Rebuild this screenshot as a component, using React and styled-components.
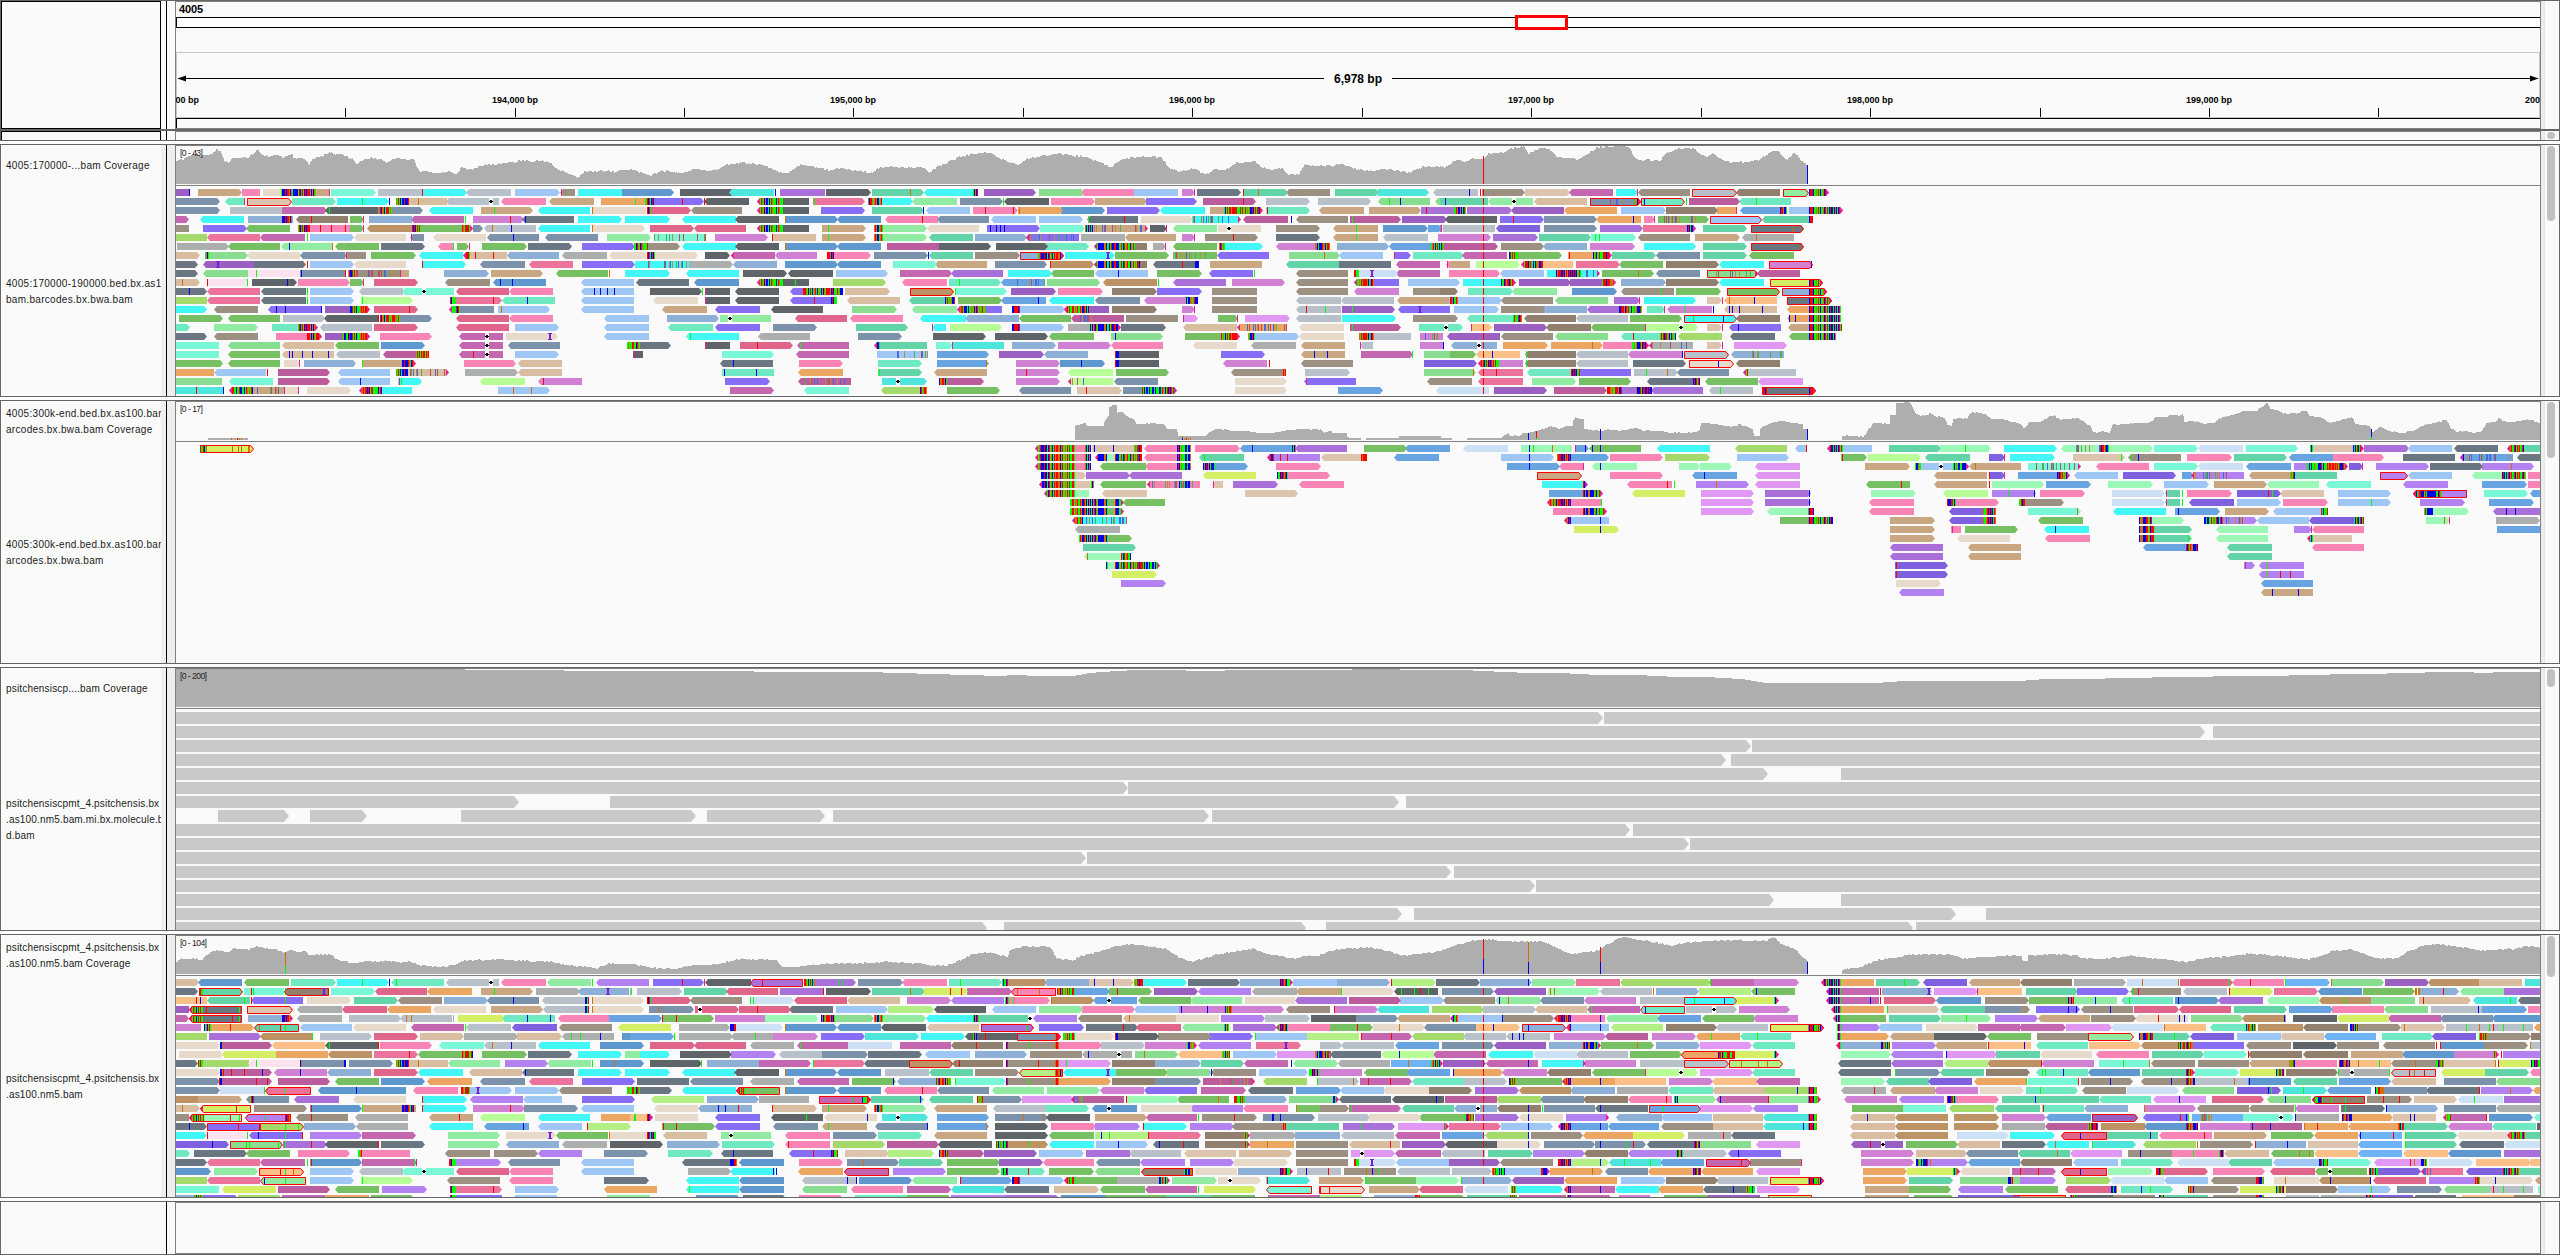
import React from "react";
import styled, { createGlobalStyle } from "styled-components";

const Page = createGlobalStyle`
  html, body { margin: 0; padding: 0; background: #fdfdfd; }
  body { width: 2560px; height: 1255px; overflow: hidden; font-family: "Liberation Sans", Arial, sans-serif; }
`;

const Window = styled.main`
  display: flex;
  flex-direction: column;
  width: 2560px;
  height: 1255px;
  box-sizing: border-box;
`;

const Panel = styled.section`
  display: grid;
  grid-template-columns: 160px 6px 8px 2366px 1fr;
  box-sizing: border-box;
  height: ${(p) => p.$h}px;
  margin-bottom: ${(p) => p.$gap || 0}px;
  border: 1px solid #666;
  background: #fafafa;
  overflow: hidden;
`;

const NameColumn = styled.div`
  display: flex;
  flex-direction: column;
  min-width: 0;
  overflow: hidden;
  box-sizing: border-box;
  border: ${(p) => (p.$boxed ? "1px solid #000" : "none")};
  border-bottom-width: ${(p) => (p.$open ? 0 : 1)}px;
`;

const TrackName = styled.div`
  display: flex;
  flex-direction: column;
  justify-content: center;
  flex: ${(p) => (p.$coverage ? "0 0 42px" : "1 1 0")};
  padding-left: 5px;
  color: #1a1a1a;
  font-size: 10px;
  line-height: 16px;
  letter-spacing: ${(p) => (p.$wide ? 0.3 : 0.17)}px;
  white-space: pre;
`;

const Strip = styled.div`
  background: ${(p) => (p.$plain ? "#fafafa" : "#eee")};
  border-right: ${(p) => (p.$rule ? "1px solid #000" : "none")};
`;

const DataColumn = styled.div`
  box-sizing: border-box;
  border: 1px solid #808080;
  border-bottom-width: ${(p) => (p.$closed ? 1 : 0)}px;
  overflow: hidden;
`;

const ScrollColumn = styled.div`
  box-sizing: border-box;
  padding: 1px 2px 0 6px;
  background: linear-gradient(to right, #ececec 3px, #e4e4e4 3px, #e4e4e4 4px, #fafafa 4px);
`;

const ScrollThumb = styled.div`
  width: 8px;
  height: ${(p) => p.$h}px;
  border-radius: 4px;
  background: #c1c1c1;
`;

const Canvas = styled.svg`
  display: block;
  font-family: "Liberation Sans", Arial, sans-serif;
`;

const LEFT = 176;
const WIDTH = 2364;

const COLORS = {
  a: "#9ec7f5", b: "#5f97cf", B: "#68a3e2", c: "#42f7f5", C: "#4de6dd", d: "#5f6468", D: "#6a7681",
  e: "#7c91aa", f: "#8fb0d6", g: "#76bf63", G: "#89dd91", h: "#91eba3", H: "#9cf8b7", i: "#79f7d6",
  I: "#6fe9c2", j: "#63d4a7", k: "#b8fe96", K: "#a4da6b", l: "#b4ef86", m: "#c566b0", M: "#bb5c9c",
  n: "#f985b6", N: "#ec739c", o: "#eba664", O: "#fbc088", p: "#9b5fc2", P: "#a970d9", q: "#886ef6",
  Q: "#7f60df", r: "#e0658a", s: "#b8c0c9", S: "#adafaf", t: "#c9a782", T: "#d8bda1", u: "#9c9083",
  U: "#90806d", v: "#b481f1", V: "#d081d3", w: "#e8dacb", W: "#cde1f6", x: "#bd9265", y: "#d4ee66",
  z: "#e098f2", Z: "#fce2ee", E: "#6fb3f7", F: "#dcc4ae",
};
const BASES = { r: "#ff0000", g: "#00ff00", b: "#0000ee", o: "#d17105", m: "#e8208c", s: "#a5b0ba" };
const STRIPES = [BASES.r, BASES.g, BASES.b, BASES.o, BASES.r, BASES.g, BASES.b];

const hash = (n) => {
  const v = Math.sin(n * 91.7 + 4.3) * 24634.6345;
  return v - Math.floor(v);
};

/* Read notation: start, strand (< > or = for square ends), colour, end, ! when outlined.
   After commas: #a-b clipped bases, ~a-b scattered mismatches, .x deletion, ^x insertion,
   and a base letter with a position for one mismatch. */
function parseReads(blocks, y0) {
  const fills = {};
  const marks = {};
  const outlines = [];
  const inserts = [];
  const put = (bag, color, d) => { bag[color] = (bag[color] || "") + d; };
  blocks.forEach(({ ox, scale, rows }) => {
    const X = (v) => Math.round(ox + v / scale);
    rows.trim().split("\n").forEach((line, row) => {
      const y = y0 + row * 9;
      line.trim().split(/\s+/).forEach((token) => {
        const m = /^(\d+)([<>=])([A-Za-z])(\d*)(!?)(.*)$/.exec(token);
        if (!m) return;
        const x0 = X(+m[1]);
        const x1 = m[4] ? X(+m[4]) : X(Math.min(1568, +m[1] + 44 * scale));
        const extras = m[6].split(",").filter(Boolean);
        const r = m[2] === ">" ? 3 : 0;
        const l = m[2] === "<" ? 3 : 0;
        const d = `M${x0 + l} ${y}H${x1 - r}${r ? `L${x1} ${y + 3.5}L${x1 - r} ${y + 7}` : `V${y + 7}`}H${x0 + l}${l ? `L${x0} ${y + 3.5}` : ""}Z`;
        put(fills, COLORS[m[3]], d);
        if (m[5]) outlines.push(`M${x0 + l + 0.5} ${y + 0.5}H${x1 - r - 0.5}${r ? `L${x1 - 0.5} ${y + 4}L${x1 - r - 0.5} ${y + 7.5}` : `V${y + 7.5}`}H${x0 + l + 0.5}${l ? `L${x0 + 0.5} ${y + 4}` : ""}Z`);
        extras.forEach((e) => {
          const k = e[0];
          const [p, q] = e.slice(1).split("-").map(Number);
          if (k === "#" || k === "~") {
            let a = X(p);
            let b = X(q);
            if (l && a < x0 + 4) {
              put(marks, BASES.m, `M${x0 + 3} ${y}V${y + 7}L${x0} ${y + 3.5}Z`);
              a = x0 + 3;
            }
            if (r && b > x1 - 4) {
              put(marks, BASES.m, `M${x1 - 3} ${y}V${y + 7}L${x1} ${y + 3.5}Z`);
              b = x1 - 3;
            }
            for (let x = a; x < b; x++) {
              const n = hash(x * 1.37 + (k === "~" ? row : 0));
              if (k === "#") put(marks, STRIPES[Math.floor(n * 7)], `M${x} ${y}h1v7h-1z`);
              else if (n < 0.24) put(marks, ["#b98a4a", "#4a6ad8", "#b8505a", "#4fb04f"][Math.floor(n * 16.6)], `M${x} ${y}h1v7h-1z`);
            }
          } else if (k === ".") {
            const x = X(p);
            put(marks, "#fafafa", `M${x - 2} ${y}h4v7h-4z`);
            inserts.push(["#000", `M${x - 2} ${y + 3}h4v1h-4zM${x - 1} ${y + 2}h2v3h-2z`]);
          } else if (k === "^") {
            const x = X(p);
            inserts.push(["#7a1fd8", `M${x - 2} ${y}h4v1h-1v5h1v1h-4v-1h1v-5h-1z`]);
          } else if (BASES[k]) {
            put(marks, BASES[k], `M${X(p)} ${y}h1v7h-1z`);
          }
        });
      });
    });
  });
  return { fills, marks, outlines, inserts };
}

function Reads({ data }) {
  return (
    <g>
      {Object.entries(data.fills).map(([c, d]) => <path key={c} d={d} fill={c} />)}
      {Object.entries(data.marks).map(([c, d]) => <path key={c} d={d} fill={c} />)}
      <path d={data.outlines.join("")} fill="none" stroke="#f00" />
      {data.inserts.map(([c, d]) => <path key={d} d={d} fill={c} />)}
    </g>
  );
}

const pts = (ox, scale, oy, text) =>
  text.trim().split(/\s+/).map((t) => {
    const [x, y] = t.split(",").map(Number);
    return [ox + x / scale, oy + y / 3];
  });

function coveragePath(points, base, jitter) {
  const first = Math.round(points[0][0]);
  const last = Math.round(points[points.length - 1][0]);
  let d = `M${first} ${base}`;
  let i = 0;
  for (let x = first; x < last; x++) {
    while (i < points.length - 2 && points[i + 1][0] <= x) i++;
    const [xa, ya] = points[i];
    const [xb, yb] = points[i + 1];
    const t = xb > xa ? Math.min(1, Math.max(0, (x - xa) / (xb - xa))) : 0;
    const y = Math.round(ya + (yb - ya) * t + (hash(Math.floor(x / 2)) - 0.5) * jitter);
    d += `V${y}H${x + 1}`;
  }
  return `${d}V${base}Z`;
}

const P1_READS = parseReads([
  { ox: 0, scale: 2.45, rows: `
431=p466,b462 485>t594 594=n636 644=w690,#688-773 773=t805,m805 811>i920 926=s1034,r1034 1034>c1143 1142<s1252 1262>a1371 1373<u1408,m1375 1416=c1524 1524=b1568
431>e540 552<I600,m599 606>F716! 716>I822 826>c952,g888,b952 970=T1095,#970-1003,o1025 1093<s1222,.1202 1228<n1338 1345<t1455 1472=o1568,g1555
431>e540 563=s690 690>m800 797<d926,g806 926>e1037,#929-960 1050<c1158 1178>t1305,g1211 1317<c1446 1451=w1568,o1451
431>m462 489<c598 608=f718,#692-716 724<U853,r763 858>g892,m890 904=f1010 1008<m1137,g1140 1160>V1283,r1250 1278<D1406,b1287 1416>c1524 1531=c1568
431=u463 497>q605 603<g710 730=n858,#730-760,r785,r812,r845 858>g892,m890 898<x1010,#1010-1030 1030>g1160,#1132-1160 1160>e1183 1186<s1313,o1206,b1252 1317<c1446 1451=w1568,o1451
431=K507 508<N637 638<m747,g751 759>a868 867<w995 1005<e1039,m1007 1062<w1191 1192<e1321,b1258 1336<e1464 1487=h1568
434>S560 558<g686 688<h815,b709,o814 820<g929 933>D1042 1074<n1111,g1110 1120>g1150,m1148 1181>g1290 1294>D1402 1426>q1555,r1560
431>T489 503>G608,#503-512 606<w735 734<e845 843<u897,m848 909>g1018 1026<c1135 1135<T1241,#1135-1152,r1163,r1208 1242<f1370 1378<S1487 1492<w1568
431>D484 497<p622,^534 622>D750,r753 759>a868 867<w995 1034>c1142,r1035 1177<e1286 1295<N1404 1426>q1555 1558=c1568
431>D484 498<G607 608=Z735,g628 735=e847,r845,b737 852=u980,#855-870,~870-975,m980 980=t1002 1088>f1197 1203>t1331 1361<g1490,o1493 1531=c1568
431>T489,o445 508=Z608,r508,g606 617>d727,b704 730>n858 858>g892,m890 916>r1025 1091<u1200 1209<b1338,b1255,b1225 1424<a1553 1560<D1568
431>D507,b464 508<N637 640<D749,g753 759>a868 880<s987 985<i1112,.1038 1118<r1247 1247<n1355 1424<a1553,b1456,b1471,b1487,b1504
431=K507 508<N637 640<D749,g753 759>a868 884>k1013,g886 1102>N1230,#1102-1118,r1208 1230<I1360,b1292 1424<a1553
431>c508 524<u633 657<q787,b675,b698,b787 796>p907,#858-905 916>r1025,r1003 1101<e1210,#1103-1127 1220>a1348,o1228 1424<a1553
439>g547 558<g686 693>s797 795<d926,r926 931>e1059,#931-980 1118<r1247 1247<n1355 1480<a1568
431>I466 524>h633 666>I778,#731-775 784<s912 916>r1025 1118<r1247 1262>a1370 1480<a1568
431>D508 524<u633 676>n788,#751-786 796>p907,#838-905 931>n1059 1124<m1232,.1192 1240>w1366,^1347 1480<a1568
431=i537 558<G686 690<T818 820<g929 933>b1042 1124<m1232,.1192 1244<e1372 1536=D1568,#1536-1568
431=i537 558<g686 690<T818,b709,b715,b741,b765,b803 822<s931 939<M1052,#1020-1052 1124<m1232,.1192,r1160 1262>a1370 1552<d1568
431>g547 558<g686 697>w735,m733 745>f873 888>t1018,#986-1014,g888 1137>n1265 1268<T1377
431=o524 524<a652,r655 681>M809 827<a955 970>T1101,#970-1000,~1000-1095 1139>S1268 1268<T1377
431=G544 560<i669 681>M809 827<a955,b882 976>c1033,m977,g982 1177<k1286 1317<V1426,r1331
431=C550,b547,r481 562<t695,#562-620,~620-690,m695 695=w730,m729 752>w861 880<c1009,#880-936 1220>a1348,o1258,o1302` },
  { ox: 630, scale: 1.912, rows: `
0>b85 96=d195 190<C275,b278 287=P372 375>d460 463>j563,o535 562<c656,#656-666 677>p777 782=G864 862<n964 964=a1048 1056>V1080,m1078 1084>D1169,r1173 1173>j1258,o1200 1254<u1339 1348>j1432 1430>C1528 1536<s1568
0=o42,#28-46 42>q142,r142,r100 142<d228 242<d342,#242-292 350>N450,g351 456>c541,#456-482 540<h625 631>e714,g713 716<d801 805>n889 889>t988 986>q1084 1096>M1196,r1172 1216>s1301 1316>s1416 1430<G1530,g1452,b1473 1540<G1568
0=w30 33>r117,#33-41 117<u214 242<d342,#242-292 365>q450 463>j562,b560 565<a650 656>n741,r678,r732 742>o827,o743 824>b908 912>q1013 1014<c1100 1109>t1211,#1136-1211 1216>I1301,r1217 1318<t1403 1413>t1512 1512=P1568,r1522
0>c76 100<c202 200<d285 296>b398,o297 396<b480 487<n588,r558 587<e686 691<a776 782>a867 873<D972,r944,g875 977>w1077 1075>c1168,~1075-1168 1172<M1258,b1263 1273<u1373 1376>M1475,g1380 1476>p1562
0>w28 38>r123 122<r222 242<d342,#242-292 367>t452,g378 467>h568,#467-484 567<w667 683>q784,b688,b700,b708,b716 783>i870 870>t990,#870-886,~886-990 994>d1026,m1024 1038<h1122 1125=w1207,.1146 1235>u1320 1345<t1430,g1388 1440>b1525 1525>B1552,m1550 1555=s1568
0>h40 46=i145,~46-145 163>V263 272=T356,r272 367>t452,g378 467>h568,#467-484 571<j656 660>f759 757<q859,~757-859 862=S946 946<t1044 1056>V1080,m1078 1100>u1200,r1153 1235>D1320 1345<t1430,g1388 1440<s1526 1545=V1568
8>u95,#8-34 100<c202 200<d285 296>b398,o297 396<b480 491=M590 590>d690 699>d799 795>I878 888<U988,#888-965 1000>S1025,m1023 1038<g1122 1127>c1211,#1127-1138 1236<V1339,#1310-1339 1352>f1451 1451<B1551,#1532-1551 1557=M1568
0=w30 33>w130,#33-48 143>d192 194<m277,#194-199 277<V358 377>n461,#377-390 467>e570,b569 571<j656 660>u745 745>f829!,#780-829 832>c928,^914 928>g1030 1038=g1122,~1038-1110 1122<q1222 1260>G1358,o1326 1356<a1440 1460>q1494,m1460 1497=I1568
10=c112,~30-110 112>S196 196<f281 296>b398 396<b480 503>i587 583<t683 698>e797 803>x888,r803 888<U988,#888-975 1000<D1087,#1080-1087,r1055 1109=t1208 1255<j1356 1356=D1455 1464<m1549 1560<n1568
0>c76 108<c208 216>d301 302<d388 394>a494 516>m616 614<P713 723>c807 804<g887 890<a991,b934 1008>g1093 1107<q1191,g1194 1273<u1373 1384>W1468,#1384-1394,^1419 1464<m1549
0=a8 12<D113 122<b208 242<d342,#242-292,g315 388>K490 521<n606 610>I710,g630 709<B794,~740-794 798>G898 905<x1007,g1009 1038<P1140 1151>V1252 1273<u1373 1385<q1470,#1385-1423 1488=a1568
0=a8 38>d138,g137 143=d192,m143 200<d285 305<q408,#330-408 411>T497 535>x620! 621>i720,g621 728>p814 818>n904 922>U1007 1007>q1093 1113=u1198 1273<u1373 1385<V1470 1497=u1568
0=a8 44<w130 143=d192,m143 200<d285 305<q395,#385-395,r351 415<T516 534<j618,#602-622 627>g711 709<B795,b781 802<c888 890<e975 983<V1086,#1063-1086 1113=u1198 1273<s1360 1360<s1460 1466<t1568
0=a8 62<t147 163<q249 269<d369 425>G510 540<h626 626<q711,#626-680 730>a832,#730-746 830<p916,#830-880 922>U1007 1056>V1080,m1078 1113=u1198 1273<s1360,r1292,g1328 1362>p1463,g1380 1468<q1568,^1510
0=a36 71>f171 172=h270,.192 315<r415 421<n522 555<c642 641<f744 743<g844 843<M945,~850-900 948=u1048 1057>z1086,m1058 1124>g1162,m1160 1176>z1261 1273<s1360 1362>c1464 1497=u1568
0=a36 72<I158 163<q249 273>e358 432>j532 577<c604,m578 612>k712 730>a830,#730-745 838>S938,#880-938 939>D1024 1058<T1160 1160<o1257,~1165-1257 1280<w1365 1376>M1475,g1380 1509=I1568,.1560
0=a36 108<c208,g114 244<S344 436>e521 580>d681 698>d799 802<g887 920>G1019,b928 1062>g1166,#1130-1166 1182>a1280,#1182-1195 1280<w1365 1394=s1494,#1394-1422 1511=V1555,~1511-1555
0>D79,#0-12 143=d192,m143 210>r311,r243 319<m419,g325 467<j568,#467-478 586>i617,m616 617=C715 730>f815 818>V919 919<n1019 1076<w1161 1188<S1274 1282<t1367 1395<s1421,m1396 1511=V1555,b1554
5=d25,m7 176>i276 318<m419 472=a570,~500-570 587>B687 706>p791 792<f876 928=d1012,#928-935 1130>q1215 1282<t1367,b1308,b1332 1398>m1498,g1496 1518=G1568
173<D273,b196 323>n408 474>I559 587>B687,o680 738>V823 823>b908,b863 928=d1012,#928-935 1133<V1218,r1222 1282<u1382 1518=Q1568
176=I275,b240,b180 321<o407 474>j559,g477 582<t683 738>V823,r758 838<k924 929>g1030 1149<u1254,#1249-1254 1291>s1376 1518=G1568
182>q267 322<M423,~330-415 482>C568,.512 591>M676,#591-607 738>V823 838<k924,#838-842,~842-878 925<e1010 1157>w1257 1288<q1388,m1292 1524<u1568
191>m276 333<i419 479<K568,#554-568 606>g707 743<e843 855>F940,r871 943>e1045,#978-1045 1157>w1257 1354>B1439 1541<W1568` },
  { ox: 1440, scale: 2.45, rows: `
0=s93,b70,r97 102>u209 209>F318 315<m424 431>c486,m482 484<u612 618>s727! 726<U833 841>h904! 903>r952,#903-948
0=j118,b13 118<h228,.181 231<T360 368>e492!,~410-470,#475-492 492>I601!,b501,g602 609>M734 733<I860,g775
0=P63,#35-63 65>P176 175<p304 304<o434 443>a553 554>U680 678=o727,m726 736<B850,#832-850 855=a905 903>r987,#903-987
0>p14 12<d140 147>q256,r180 255>e384 383<o492,b474 500>n526,m524 534>g660,~550-645 661>a790! 788<j903,#903-915
0=m4 6<s135 136<Q245 255>e384 391>P498 497>N628,#606-628 644>j753 763>D892!,o865
0>V124 130>P239 243>j370 369>i479,g390,g380 484<u612 625>t734 739<S867,o775
0>M141,#0-10 149>u256 253<f360 367>V477 500>c628 644>j753 763>D892!,o885
0>I60 55<m164 170>g298,#170-190 314>o422,#375-422,r315 422>j530 528<e637 644>j753 758<g867
16<t73,m17 88>k197 198<O326,#198-253 333>N440 438<g546 554>U683 684<c794 805>V914!,b909
22>n148 147<a255 262>c392,#285-345,~345-390 398>g525,o484 528<e637 653>G778!,~653-778 776<M882
0>a50 56>c187,#150-187 194>p320 318>p430,#397-430 443>f553 554>U683 684<c794 809>y938!,#903-938
0>U43 69>I178 177<h287 323>b433 444<u573,g538 578>g688 702>g832! 839>f948!,#903-948
0=t25 22>a152,#25-45 149<u277 282<G412 426>P490,m488 500>c628 653>F692,m690 697<O826,b770,o707 851>D960!,#903-960
0=q22 34>a144 149=u257 253<f360 361<P495,#438-495 507>I552,m550 557<V666,g601,b670 697<T826,b709,b716,b732,b789 849<o982,#903-982
0>u43 67<I200,#180-200 206<U333 333<s461 465>g594 599>c727!,g621,b694 726<U833 849<o982,b855,b869,#903-982
0>I56,.14 76>O128,m77 132>p261 260<U370 371<g503,m503 505>k632,.590 653>F692,m690 707<q835,b731 852<t985,#903-985
18<p148 149<u277 282<G412 444<I577,#538-577,r472 583<K692 711<D821 855<g970,#903-970
28<f140,.95 154>o264 272>o400,o373 399>n513,#470-513 513<S620,~516-612 653>F692,m690 720>z849
0>g88 88<O196,b128 208<U333,g211 333<s461 461<V594,b594 599>s709! 714<f843,~740-840
0>Q90 94<V203,#94-145 208<U333,g211 333<s461 473>D602 611>w721!,b680 724<U833
0>G88,o80 94<N203,r138 212<I322 322=q468,#322-343 475>s583,g505,o557 580<e708 742<s872,#742-755
0=u78 94<N203 225>h334 341>g469 506<D638,#620-638 650<g779 780<z889
0=W120 132>p261 279>M408 409=P519,#409-445,#480-519 516<P644 658<s767,g687 790>D920!,#790-800,#903-920` },
], 189);

const P2_READS = parseReads([
  { ox: 0, scale: 2.45, rows: `490>y622!,#490-508,o568,o583,o590,o607,o611` },
  { ox: 1000, scale: 2.24, rows: `
78<n203,#78-168,#190-203 205=F318,#300-318,b211,b252 323<n428,#396-428 437>n537 538<B662,b565,#655-662 661<P777 815>g912 908<B1008 1037<W1138 1167=H1281,o1237,b1184,g1195 1287>B1320,m1287,b1310 1320<g1436,b1345,b1325 1472<c1568
78<n203,#78-168,#190-203 213<H318,#213-240,#258-318 323<n428,#396-428 446<j547,g458 598<v717,#598-613,r628,r642 718<F822,#808-822 883<B983 1122>a1241,b1184 1247>B1365,#1247-1280 1366>n1485 1490=K1568
78<n203,#78-168,#190-203 224<g326 324<n428,#396-428 455>B555,#455-482 618>n719 1136>B1254,b1184 1252<n1306,m1305 1327<H1427,b1345 1521>H1568
92>F192,#92-168 193>P292 290<P408 455<y573 620>n739,#620-645 1202>t1303!,g1202 1366>n1485 1551<B1568
87<F210,#87-168,#203-210 224<g326 330<n448,#400-425,~335-440 475<F500,m476 522>P622 670<n771 1214>c1317,#1305-1317 1405<n1505,r1493,g1509 1559=v1568
98<H199,#98-168 229<F329 549>F667 1230>B1350,#1305-1350 1416<y1534
157>g277,#157-243,#258-277 275<g370 1225<n1348,#1225-1280,g1346
157>g277,#157-243,#258-277 1239>n1360,#1306-1360
161<c284,#161-185,~185-284,~186-284 1263<a1364,#1263-1280,b1345
168<S269 1286>y1387,b1345
177>g296,#177-242
186>j305
188<H293,#271-293,o195
237>H358,#237-243,#258-358
251>y352
271>v372` },
  { ox: 1700, scale: 1.823, rows: `
0=c18 63<K159 173<a195,r194 232<a314,#232-260 345>j440 438>H531,g484 554>c650 659<H745,~685-730,#730-745 745>H825 827>i908 908<W990 995>i1091 1112>F1210,#1112-1117,#1190-1210 1210>P1292 1291<a1371 1374<D1455 1472<j1532,#1472-1503
0>K18 67>a163 257>g304,r258 306>k402 411<j492 527>Q556,m554 565>c647 680>F775,g767 781<u877,g785,b799 888>n970 974>j1070 1073<B1154 1152>n1247 1282=D1377 1386<B1482,#1386-1392,~1392-1475 1490<D1532
0>H58 100<z182 301>t382 392>a490,#392-402,#462-490,.440 490<t585,o502 598>i694,~605-690 722<n819 827>i908 908<W990 996<B1078 1083>v1181,#1107-1181 1183>Q1208,m1206 1233>v1329 1331>D1427 1425>v1520,o1478
0=B67,b8 100<z182 427<t523,r526 527>Q556,m554 580>B675,#650-675 681<a762 771>Q867 879>B900 895<v992,~900-970,m898 1000<t1078,#1075-1084 1084=j1161 1240>v1291! 1290<a1371 1408<H1506,#1462-1506 1510=n1532
0>v89,o30 100<z182 302<g383,r367 427<t523,r526 532>H628 631>B712 744>H825 846>a927 937>t1033 1033<H1129 1142<i1223 1282<v1364 1426>B1507 1510=n1532
2>z98 119>P202,b199 312>H393 443<k525 532>v613,g561,b609 620>n701 751>W847 848<j875,g878,m850 888>n970 979>Q1060,r1035,g1042 1057<F1138 1163>a1260 1300<v1398!,#1300-1352 1429>i1510 1514<B1532
2>z98 119>P202,b199 308<n390 450>n545,#450-467 582>u664,#582-593 751>W847 848<j875,g878,m850 892<Q974 979>a1060 1062>n1144 1163>a1260,g1224 1313>v1394 1439>B1520
2>z98 122<H208,#197-208 308<n390 454<Q540,#516-540 598>i694,o688 753<c850 866>B948,b872 957>t1038 1045<a1145,#1132-1145 1320>H1401,#1320-1336 1445<P1532,b1470,b1486
146=g243,#197-243 346>t428 454<Q540,#516-540 617<g698 800>H882,#800-824 918>v1015,#918-952,~952-990 1015<a1110 1110<Q1211,#1192-1211 1324>H1368,m1366,o1356 1451>S1532
346>t428 458=n476,m459 483>g579 627<c709,b648 800>j897,#800-827 940<H1036 1083>v1115 1115<n1211,m1113 1453=B1532
346>t428 469<w565 629<n711 800>j897,#800-827,g890 940<H1036 1107<F1189,#1107-1118
346<P443 489<t585 808<B908,#886-908 961<j1043 1115<n1211
346<P443 489<t585 961<j1043
356>Q452,r357 992>v1011,m993 1019<v1101,g1033
356>Q452,r357 1019<v1101,g1033,r1058,r1075
357>w439 1022<B1118
363<v445 1022<t1118,b1043,b1090` },
], 445);

const P4_READS = parseReads([
  { ox: 0, scale: 2.45, rows: `
431>T487 484<b593 599<g708 713>I822 826>c952,g888,b952 959<I1088,g970 1092<s1223,.1202 1228<n1338 1339<h1448,g1451 1461<v1568
431>D484 487>j596!,#487-498 597=i697,r614,g620 697<U806!,^794,g699 811>i918 918<r1046 1047<o1156 1178>t1305,g1211 1313>S1420 1417<f1541,^1489,g1546 1561=s1568
431=O508,r481,b490 507<j612,g599 614<q742,g699,r614 752>w861 867>j975 975<u1084 1088>f1195 1193<e1321,b1258 1328<s1435,#1433-1443 1451=w1568,o1451
431=p463 463<D592!,#463-498,r505,g586 606>F717! 728<S837 837<r947 947<o1057 1062<w1191 1203>t1331 1331<s1435,#1433-1443 1451=w1568,o1451
431>m463 463<D592!,#463-498,r569,g586 608>f718,#692-716 728<S837 855>s983 980<s1108,s1111,o994,o1007 1122=y1232 1230<I1360,b1292,b1348 1367<n1495 1493=B1568
431=V492 500>o622,#500-517,r564 622<j732!,g699,o635,r687 734<a862 866<w995 1008<m1137,g1140 1142<s1252 1255<Q1365 1370<u1499 1515<y1568
431=K507 512>P640 638<x765,g765 784>s912 916>r1025 1028>T1138 1137>S1268 1267>T1378 1376<S1504,g1400,g1421,b1469 1524=b1568
431>w540 540>M667,#540-546 667<O797 796<d926,g806,r926 931>n1059 1076<i1185 1185<s1313,o1206,b1252 1317<c1446 1470=b1568
439>w547 545<y675 676=o803 803<x912 916>N1025,r1003 1025<g1158,#1132-1158 1181>g1290 1294>D1402 1416>c1524 1531=h1568
431>D484 486=K610,#486-498 608<Z735,g628 735=e847,#735-739,#843-847 855>e963 970=T1097,#970-1003,o1025 1097<h1226 1237>v1343 1340<h1449,g1451 1470=b1568,o1504
431>w540 540>M667,#540-550,r598,b643,r567 672<V802,b736 801<f909 916>r1025 1025<c1134 1150<T1280 1278<D1406,b1287 1416>c1524 1531=c1568
431>e540 540>M667,#537-545,r628,r655 681>M809 820<g929 933>b1042 1047<o1156 1177<e1286 1295<N1404 1426>q1555 1560<D1568
431>e540 540=W646,g646 650<N761!,g699 778<b888,b873 888=b995 1012<n1122 1129>a1255,#1129-1152,^1171 1262>a1370 1370<u1499 1536=r1568,#1536-1568
431=x486 484>t594 602<e708,#612-622 721<P831 866<w995 1034>c1143,r1034 1152<v1282 1282<a1378 1426>q1555
431>T489,o445 489<y616!,#489-498,r577 622>u751 759>b888,r763 888=t1018,#986-1014,g888 1034>c1143,r1034 1160>V1286,r1250 1285>e1415 1424<a1553
431=u463 463<H592!,#463-500,r564,g586 601<v712!,g650,#699-712 724<u853,r763 870<S1000 1050<t1159,r1124 1177<k1286 1317<c1446 1472=o1568,g1555
431>D507,b464 508=q637!,r582 637>K745!,g699,g730 745>f873 871<S1000 1050<c1159 1187<B1296,b1282 1317<a1426 1437>l1545,r1437
431>c508 508=Z606,r508,g606 611<q742,b633,g699,r741 759>v888 888>m1018 1098>h1226 1240>w1362,^1347 1362<g1490,o1493 1494=w1568
431>Q560,b520 564>G693!,g603,g611,g680 693>P800,g699,r763 797<d926,r926 933>D1042 1098>h1226 1240<f1370 1378<S1487 1494=d1568
431>I466 475>D604 602<g710 730>n858 877=n1005,#877-887 1091<u1200 1210>u1318 1317<v1426 1480=e1568
431>D508 508<N637 638<m747,g751 759>b888,r763 888>m1021,m1018,g1014 1101>v1228,#1101-1117 1244<e1372 1424<a1553
431>b518 524>h633 635>O746!,g699,r687,o718 759>a868 880<s987 985<i1112,.1038 1118<r1247 1247<n1355 1424<a1553
431=K508 508<N637 638<h749!,g699,b648 759>a868 884>k1013,g886 1096<u1225 1246<n1355 1480=D1568
431=i537 545<y675 681>M809 820<g929 936>v1045 1102>N1230,#1102-1117,r1208 1262>a1370 1480<o1568
431=f475 475=h497,#475-497 497>q582 582>K690 690=m797 797=o904 909>g1015 1102=q1230,#1102-1117 1262>a1370 1487=h1568` },
  { ox: 630, scale: 2.24, rows: `
0=v43 52>q166,r117,m165 167<d270 269<P388!,r295 390>P507,#390-414,g467,g474 511>e611 610<n710 715>I833,g739 833=x929,#833-847 928<f1028 1028>F1130,b1040,b1081 1130>c1247,#1130-1148 1250>D1367 1366>f1486,#1455-1486 1486=a1568
0=s2,g2 16>s116 121>j219 215<r332 336=P434,r433 438>d540 542>j661,o627 659>y758,r717,r742 755>m856 853<n954!,o917,o866 957>B1075,#957-997 1074>g1169,r1090 1174>p1273 1273<v1391 1394<S1493 1492<t1568
0>w32 38>r137,#38-47 135<u251 268>W368,g268,g275 368<r487 487<T605 620>V720 718<v837 840>n940,#840-848,g857 942>x1040,o943 1037<B1136,.1074 1138<g1256 1255<h1371 1378=w1490 1489<P1568
0>w32 43>e143,o62 146>r245,.157 245>r360,r285 356<D455 461>a579 579>l681 680<d797 810<a909 916>h1014 1013>n1131 1129<a1230 1228>V1465,#1333-1348,b1235,b1293 1469<u1568
0>B72,r72 72>g189,r103 190=V303 303>H420 428>G546,#428-460 546>h663,#546-567 662<c782,#769-782 782>j900,.895 903<v1001 1003<u1102 1105<T1223,o1118 1223=w1320 1324>v1422 1423>s1524 1525=d1568
0=y92 110>S225 225>W342,#225-238 347>b463,o348 463<b563 563<d663 665<F782 787>P906!,g888 916>q1016 1022>D1137,r1105 1134<r1235 1237<h1342,#1330-1342 1351>P1450 1448<n1568,#1450-1473
0>B98,g98 110>S230 226<S323,g280 320>V421 428>q526 527>C647 652>c750 750<d866,#768-778,r796 867>e965!,#953-965 970>w1084,#970-997 1086>d1185,#1086-1092 1183>u1302 1298>q1396,g1399 1402=a1516 1516=l1568
0>b32 45>r145 143<r260 268<S367 373<m488,g381 488=W587 605=m720 718<U836,r774 843=u958,#843-847,#953-960,g891 960>n1057 1054>s1153 1153>V1270,#1247-1270 1273<v1391 1402>N1502,^1469
0>c89 112>d228 227>v328 333<s431 431>e532 534>D653 661<a762 773>f890 896=u1012 1012<S1124,.1095,b1027 1131>G1228,o1152 1227<O1345,#1325-1345 1351>a1450 1449>z1568,#1535-1560
0>b32 45>d162,g160 172=f288 289>m405,g410 411>N527 525<D625 625>x723! 721<U836,r738 843=u958,#843-847,r914,#953-960 960>z1077,g977 1080=U1177 1177>f1278 1278>j1376 1375<m1474,b1480 1486<h1568
0>c89 117<c236 234<d334 347>b463,o348 463<b563 571=s669 669<j768 773>u871 871<l970!,#953-970 970<c1088,^1070 1088>g1206 1203>G1303,b1302 1302<u1403 1409>a1518 1521=g1568,#1521-1540
15=D132 135<e253 268<S367 373<m491 497>g596,b590 599<f720,#686-720 727>i842,g727 843=u958,#843-847,#953-960,g891 958>o1077 1080=U1177 1177>e1278 1284>M1400,~1310-1400 1417<K1517 1538=s1568,g1538
0>D93,#0-15 117<c237 237<g335!,#237-258,g275 347>b463,o348 463<b563 570<n687,r655 687<e804 810<h928 934>h1052 1052<V1152 1152<q1270 1280>m1380 1385<D1485 1492=B1568
0>q10 48<l166 172>f290 289=S402 424>m540!,#520-540,g497 540>j658,b650 669<j768 777>e877,#777-790 877>z994 988<M1107,~995-1020,r1110 1113>H1230 1225<g1342,o1318 1354>f1471,#1354-1378 1476=G1568
0=a8 53<w152 153<f273,b198,b213,r243 318>T418,r318 430>t530,g443 547>h664,#547-567 682<t800 812<s932 929>I1028 1035<b1136,.1074 1144=w1258 1255<v1373 1373<n1474 1492=g1568,o1492
0>O52,#38-52,g10 55=w152 191<q291 315<d432,g395 434<w553,b530 564>C667,.600 688>B805 818>e936,o880,o925 931<d1030 1042>t1157 1155<m1270,g1273 1282>u1405,r1352 1417>e1534,b1437,b1441,b1455 1541=s1568
72>g190,r103,r73 191<q291 320<e420 430<t530,g443 548<e667,b666 688>B805,o797 818>d936 942>n1043 1042>v1143 1149>c1247,r1150 1254>v1352 1348<u1469,#1463-1469 1470=j1568
0=w40,#38-58 73<T172 203=h316,.226 348<n448 455>e554 555>I655 682<t800 818>d936 939<g1039 1041=l1160,b1054,g1074 1160>N1279,r1160 1288>U1389,#1375-1389 1389>S1492 1490=f1568
0>d73 83>f201 205>I324 348<n448,r355 455>K572 575>M692 690<d810 820>x937,#820-847,g891 939<c1039 1043>a1160,b1094 1171<D1275,b1186,r1238 1288>U1389,#1378-1389 1389=o1487,o1427 1491=u1568
0>e41 85>I185 203<D320,b230 357<q465,#450-465,r411 482>F580 579>l680 693>M792,#693-712 792>p911 916>a1016 1021=P1120 1117<s1234 1240<F1357 1364>T1482 1491=u1568
0=a8 117<D240,#225-240 245<b345 378>n478 486>e603,o521 602>j702 710>g828 826>p926 924<n1039 1043<e1142 1143<v1243 1254>v1354 1353>w1474 1491=u1568
0=a8 130>S227 225<c325,b321,b326 377<o477 480<m581! 589>v707 710>g828 830>I929,#830-847,r891 939>g1039 1042<G1142 1144<U1262!,#1240-1262 1265=w1360 1362>f1486,#1455-1486 1493=s1568,b1514
0>D42 126<c245 245<b345 386<s507,b487,b507 513>b632 632<h732 740>B856,r740 856>a973,#855-874 973<g1091,#973-997 1090>S1210,#1186-1210 1215>h1315 1317>w1413,.1343 1425>C1524,r1427 1543=t1568
0=o60 126<c245,g133 245<b345 386<G486 494<n612 620>m720 720<C838 838<D939 949>T1050 1053<g1153 1154<m1270,g1273 1285>y1402 1425<i1527! 1543=w1568!
0=h45 147>b247 252>D350 378>n478 505=I620 620>g720 720=v840 840>P960 966=b1064 1064=g1200 1200=j1303 1303=g1400 1430=m1545` },
  { ox: 1320, scale: 2.24, rows: `
0=a38 37>f156 160>l259,r160 260>D358 358>f475,b467 474>h573 573=N672 672<K773 772>K875,g874 875=m972 972>V1072 1123<o1241,#1123-1168 1245>j1345,g1308 1350<Q1449 1453<t1568
0=t46,g48 50>w166 166<d264,r225,g182,g210,g242 273>e390,r366 389<p507 511>H628,o516,o525 627<s743,o747 753>f850 849=l966 966<g1064,b976 1133<m1252,#1133-1168,r1255 1259>f1370,^1365 1375>z1475,m1472 1474>O1568
0=P60 65>M181 179>a277 276<u392 392<h493,b400,o420 493<e592 592<V708 717=s815 816>c935!,b904,g837 930>y1029,#1018-1029 1133<m1252,#1133-1168,b1231,r1255 1263>r1380 1380<b1480 1490=u1568
0=u22 32>V129,r32 127<C244 251>K368 366>s484 482<T599 598<m716,g608 717<I817!,b727 819>s935,.882 938>V1053 1145<o1263,#1145-1168 1269>F1387,g1269 1388<j1490 1490=e1568
0=d80 78>e175 173<t291 291<a407,#291-310,r366 407>u524,b408 524<n638,#524-563,b628 640<h757 755<B854 855<g972 971<V1071 1150<g1268,#1150-1168 1275>j1391 1390>h1503,g1446 1511=v1568
0=n20 20>g118,r82 118>w235,o176 233<e350 349>O448,r366,b387 453>f551!,b467 551<a647,#551-563,b628 651<l768 775>U890 888<s1004 1009>y1129!,#1093-1129 1157>v1255,#1157-1168 1250<a1348 1357>w1475 1473=m1568
0=l87 91>m207,r91,r158 206<K323 320<s416,r366 416<s515,b430,b445,b455 524>V640 638<M735 744>V842 842<o940,g875 940<I1055,g978 1157>o1274,#1157-1168 1277<t1376 1376>d1495 1493<g1568
0>s50 48<s165 168<B267 273>e389,r366 389<p507 513>f630,#590-630 630>g749,o711 753>f852 852>z968 968<I1064 1155<f1276,#1155-1168,#1257-1276 1281>v1380 1377<t1494 1497>O1568,r1497
0=D25,#0-20 22<D137 137<k255,b178 254<m371,r366 376<c476 476<W575 573<s690 694>g810 808<o930!,#892-930 930>y1029,#1018-1029 1167>H1280 1278<v1396 1403>z1517,b1403 1515=j1568
0>h40 40<S157 159>E275,#249-275,o196 275>p372,r366 371<m488,b467 497>c595,#588-595 594=V708 717=s815 816>s916! 916>l1036!,o943,o982,o1002 1161<D1279 1280<P1396 1397<l1497 1495<x1568
0=V94 98<g196 193<B291 298>o411,b298,r366 407<V509 508<U608 609<g728,m727 728>k847,.808 852>z969 968<I1064 1161<D1279 1288>e1388,g1288 1388<j1488 1492=U1568
0>s87,o73 90>m207,r108,r156 207<I323 323>s419,r366 424=g541,#424-440 541<o660,#541-563,b628 660=O775 782>V880 879<O978 976<m1075 1167>H1265 1267<j1364 1361<Q1460 1464<o1568
0>B46 44<a143 142<w244 245>U340 347>P446,r366 446<x563 561<f661 665=S780 780<I880 879<T996 993<K1113,b1069,#1093-1113 1168<S1268,r1242 1277<t1377 1375<V1474 1478=w1568
0>G42,#30-42 43<D160 161<d278,b260 280=M396,r366 395<K495 493<e592 590<U690 690<n789,r776 793>h888,#793-803 887<m1005,b897 1004>h1123,#1093-1123,r1004 1174<V1292 1298<v1398 1404>n1520,#1404-1425 1527=j1568
0>u64 65>m182,g70 183<j300 300<f397,.355,r366 396<U495,b467,g498 502=e617 617<D735,b628 736>B853!,g768 852>z970 970<v1071 1192=g1306 1306=i1402 1410<K1510 1512<j1568
0>s112 110>w227 222<g340,#325-344 347>P446,r366 446<w544,b467 550>v648,#648-662 662<f765 764<a878 880=T993 992<C1113,#1093-1113 1188<T1288,b1226 1289<x1407 1420>x1520 1527=V1568
0=j43 52>P168,g91 175>z290,~270-290 289>N405,r366 405>a522,b467 533<B645,#533-563,b628 645<B759 764<u880 880=T993 992<C1113,b1083,#1093-1113 1188<T1288 1289<x1407 1420>x1520 1527=S1568
0=f45 48<s166 168<m269 273>B370,r366 370<K467,b467 473>u590 590<o705 702>y818 824=S920,r902 920<D1019 1188<T1288 1289<x1407 1427>W1544 1545=c1568
0=u62 64<T179,r156 184>p282 280<d396,r366 396>w495,b467 502>e617 616>e730,b628,r700,g686 732<D850,#838-852 852=G965 976<z1075 1190<p1306,.1262,r1231 1313>g1428 1426<T1523 1527=D1568
0=u62 69>z168,.93 168<m270 270<s369,r366 376>j476 476>v594 592<U690 690<v812,#797-812 813>s912 915<q1033,b937 1212>V1330 1335>T1450 1447<e1564
0=u62 76>W171,#76-87,^116 171<a290 288>p404,r366 403<u522 533>l647,#533-563,b628 647<C763,g680,g740 761<B860 865>m965!,r942 963=u1080,m1077 1212>V1330 1335>v1452,#1335-1362,o1367 1452<B1568
0=s46,r19 54=u171,o102,b117,g132 173<s291 295>s385 385>a515,#385-414,#495-515 515>o635,o610 638<e735 734<o853,#836-853 853<o970 976<z1075 1216>o1314 1315>y1433,#1417-1433 1433<w1546
0>t98 100=g216,g100 214>H312,g315 316>f430,r366 429<p547 547<o665 674>a775 775>U892 888<s1004 1009>y1129!,#1093-1129 1216>o1314 1320>j1419 1434=G1568,#1540-1550
0>w100! 110>t225 222<r320 323<W421 428>c545,#428-440 547<m660,#547-563,b628 660<c760 757<o857 858<D975,#955-975,b924 978>z1075 1221=t1320 1315>g1413 1430<v1530 1537<g1568
0=l95 120=f213 213>g325,#213-225 330=j442,#425-442 445=m550 553>m655,#553-563 670=V740 770=g868 868=p985 1003=y1103! 1221=t1320 1330>g1420 1430=Q1568` },
  { ox: 2000, scale: 2.8, rows: `
57<U202 207>S354 355=W499,o397,o499 504>r651,g637 650<n795,r701 800>E925,g799 928>G1074,o928 1078>p1201 1199<x1340 1340=T1462 1470=C1512
40=O62 73>j217 215>q362 363<u507,r387,g370 512<s636 642>y765,r642 767>N890 890<b1014 1017>g1162,o1163,o1166,o1170,o1173 1176>f1286,r1239 1287<h1411 1411=P1512
40>u80 80=g207,#190-207 207=h328,b267 338<I485,g362 490>b613,b499 611<P736 747<H893 892<x1040,g967 1040=G1162 1174>T1320,r1183 1323<C1448,g1429 1449<D1512
40>u83 101>q225,b190,b214 226<u373,b309 374>r500 500<r647 655>j803 809>B932 930=n1076 1076<G1198 1207=s1350,b1339 1350>B1475 1478=n1512
40>v107 105<t253 255>u380 379<w527,b502,b514,r441 535>G680 678<x800,b794 820=d944 943<y1088 1086<m1234 1232<e1379 1377<b1512
40>m62 60>m186 186>z313 312<W457 456<O577,o460 587<I717,#690-717 722=x848 848<U973 980>u1124,#980-1003 1124>F1246,o1132 1248=s1380,g1306,o1342,g1370 1380=s1492,r1381,g1409,g1465 1495<o1512
40=g87 104=u247 247>h374! 389>j533,#389-428,g488 532<Q655 664=a786 785<F907 907<E1053 1070>I1211 1209<Q1333 1342>u1486,#1342-1364 1486=U1512
40=O87,b66 100<I246 249>O395 394<x540,#497-540 540=q683 690<u815 820>d944 943=u1061 1071<u1218,r1222 1233=b1355,r1233 1355>u1478,o1485 1487=s1512
40=j112 112<w258 270<n417 426>j570 570>i692 695<U845,r695 848<U973 983=t1127 1125<b1270 1270>V1398,#1383-1398,r1404 1407=v1512
40=x116,r114 116<V263 277=i420,g345,o418 423<u546 554=u697 697<t822,#810-825 825=n944 949=O1096,#949-980,g1060,o1002 1095<u1243,#1222-1243,o1163 1243=F1388,o1386 1393=y1512,#1487-1512,r1393
40>U85 100<I246,b177,g117,g127 246<b392 397>j545,#522-545 545>i670 671=y798,#774-795 800>U946 947=S1090,.985,g947,g1090 1095<s1220!,o1158,r1188,r1146 1235<y1357 1357>j1481 1485<n1512
40=o73,g74 78=i220,r218 227>u373,b309 394<u545,#522-545,b480 545=s693,o654 693=b815,b696 819<j944 949>B1096 1096<T1221 1243=e1390 1388<G1512
40>w68 73>I219,g111 230<u354 355>W501 510<G656 664>Q788,b749,g760 792>C915,g849 915<B1039 1050=e1195,#1050-1075 1193<D1340,r1340 1347>v1492,o1429 1492<o1512
40=j150,b99 152=j277 276<I423 428<z577,b502 594>r740 747<G872,b799 873<U1022!,#873-905,g928,g967 1028>u1153,r1073,r1118 1159>F1280 1282<W1407,g1326 1411=P1512
40=j112 118=I236,r119 236<f357 404>V550,o404 551<u697 698<u823 827<V949,g827 955>D1078,g967,b1082 1080>f1226 1243=e1388 1388<S1512
40>V129 128<B254 258>p385! 399<q528,r505,b522,g527 538=E680,~555-600 678>i823,.787 827=S949,b827 957>o1100,#957-985 1100=F1220,b1147,b1160 1239<m1363,#1239-1262,r1362 1368>b1493 1495<i1512
40=S127 125<M275,#245-275 283=x405 403<b553,#522-553 560=V702 700=M846,b757,b706 851=o975,r888,o852 975<o1130,#1115-1130 1130>j1255 1254<V1378 1377<I1502 1504=d1512
28>c153 172<r300!,b225 300=j442,b421 446<n594,r570 600>t747 759>g880 879<o1003 1002<E1126,b1008,r1101 1134>j1280,g1135 1280<w1425 1420<j1512,#1420-1470
40>D130 128<c249,o155 258>C382,g258 401<K550,o552 560>u707 714=f858,b803,r715 862=F1003 1001<E1126 1134>j1280,g1135 1286<D1411 1411<W1512
50<j197,o160 195<z342 358=u482,b393 480=n627,#613-627,g541 628<T753 759<g880,o838,o866 879<O1003 1001<E1126 1128<O1253 1255<b1403 1411=P1512
40=b57 57<U202 205<a330 339>I485 496<W640 638<j762 764<a917,#893-917 917>i1039 1046<z1196,#1180-1196,r1147,o1158 1201>W1325 1332=O1480 1478<O1512
34>m158,r57,r105 172<r300!,b225 302>H427 437>r583,#437-455 596>n743 757<r883 883<g1028,.923 1034>Q1178,#1034-1057 1178<N1296,~1180-1220 1304<Q1452,#1408-1452 1452=j1512
34>v158,r34 185>K310 309<W459 458<a583 590<u740,#717-740 767=w892,o799 892<x1038,b925,b1037 1045<r1193 1201=v1345,#1330-1345 1345>w1491,b1387 1497<t1512
15<g162 183<r328,#310-328 339>I485,b396,g420 525>u670,#525-543 671=y800,#774-795 800>U945 945>a1094,g1040 1111>e1237 1244<G1370 1370=s1492,g1408,g1465,r1381 1505=i1512
38=o185! 195=d315,#195-210 315=u435 445=j583,#445-460 590<u740,#717-740 800=s893 898=S1025 1025=Q1155,#1025-1045 1155<D1277 1293=O1440 1440=U1512` },
], 979);

const P1_COV = coveragePath([
  ...pts(0, 2.45, 0, `431,483 445,480 455,470 475,460 490,466 505,462 518,465 530,448 540,455 548,480 560,490 568,475 590,473 605,475 625,455 632,450 640,465 655,470 680,465 690,472 715,460 718,475 735,472 745,478 757,492 765,475 790,468 805,458 812,454 820,465 835,462 845,470 862,475 872,493 890,480 910,474 925,477 938,480 945,489 958,477 985,475 1000,480 1012,475 1020,500 1028,513 1050,515 1070,517 1100,515 1118,522 1130,502 1145,509 1165,505 1190,492 1215,493 1240,486 1260,487 1275,480 1295,485 1320,482 1345,487 1355,498 1370,510 1385,517 1400,527 1418,533 1430,514 1460,514 1490,511 1505,517 1520,508 1543,510`),
  ...pts(630, 1.912, 140, `0,88 20,98 40,106 60,92 80,94 100,100 120,88 160,92 180,76 210,68 245,73 265,82 285,98 300,100 325,75 350,80 380,90 400,84 420,90 440,92 460,100 475,85 500,80 520,84 560,82 572,98 590,78 610,65 630,50 660,40 685,37 700,50 715,60 740,76 760,55 800,45 815,40 840,46 870,50 900,68 920,82 935,62 960,52 990,50 1015,50 1030,85 1050,95 1075,85 1100,103 1115,90 1140,88 1158,68 1195,66 1205,82 1225,90 1245,85 1258,104 1278,104 1290,74 1320,76 1340,78 1360,70 1375,82 1400,90 1420,95 1440,87 1470,92 1490,98 1515,80 1545,80`),
  ...pts(1440, 2.45, 0, `0,500 10,503 40,480 60,483 80,477 105,477 115,463 140,458 160,455 175,445 205,440 215,460 235,450 255,442 275,455 285,470 320,475 340,478 365,457 385,442 410,440 440,439 462,440 475,470 490,480 520,480 540,482 550,460 575,450 600,443 620,445 635,460 655,470 665,460 690,480 715,488 750,485 780,480 800,462 825,450 840,470 850,478 865,458 880,475 890,487 900,497`),
], 184, 1.8);

const P2_COV = [
  coveragePath(pts(0, 2.45, 390, "510,144 608,144"), 440, 0),
  coveragePath([
    ...pts(1000, 2.24, 390, `168,108 190,97 194,108 232,108 232,96 243,75 244,52 252,45 260,45 260,68 272,66 285,80 300,90 305,102 335,100 365,102 374,117 396,118 397,138 430,138 437,139 460,138 465,129 482,118 505,118 520,123 545,122 578,129 610,129 645,120 670,118 717,118 725,128 740,122 745,129 775,130 776,139 782,144 808,144`),
  ], 440, 0.4),
  coveragePath(pts(1000, 2.24, 390, `819,144 892,144 892,138 987,138 988,144 1012,144`), 440, 0),
  coveragePath([
    ...pts(1000, 2.24, 390, `1046,144 1124,144 1125,138 1138,130 1141,138 1167,136 1168,129 1190,127 1215,117 1235,108 1252,117 1265,108 1283,108 1283,92 1288,81 1300,88 1308,88 1308,116 1325,120 1350,123 1362,118 1385,123 1425,112 1440,122 1480,123 1500,128 1550,128 1565,122`),
    ...pts(1700, 1.823, 390, `2,97 30,103 48,109 68,109 69,103 84,108 96,118 97,138 108,138 108,117 120,105 135,97 150,92 165,97 186,103 187,118 195,118`),
  ], 440, 0.8),
  coveragePath(pts(1700, 1.823, 390, `259,138 301,138 303,125 316,99 345,102 346,75 357,75 357,40 370,37 383,38 392,68 400,77 416,75 418,66 426,78 445,82 450,105 459,107 460,87 485,85 495,66 517,70 530,87 555,88 570,97 583,100 590,115 600,97 620,96 635,80 645,77 655,88 690,85 700,97 712,110 715,125 722,129 735,124 746,129 752,103 785,100 820,98 830,80 850,82 855,76 880,75 882,95 900,93 920,103 940,97 945,85 975,73 990,62 1012,64 1028,46 1033,37 1038,54 1050,60 1062,70 1086,70 1103,62 1112,78 1130,82 1150,100 1170,88 1190,83 1193,102 1220,108 1222,118 1225,128 1240,110 1255,124 1280,129 1297,123 1320,105 1340,98 1360,90 1368,115 1378,125 1395,122 1410,129 1425,122 1432,100 1450,95 1455,84 1470,97 1490,95 1510,88 1525,97 1532,97`), 440, 1.2),
].join("");

const P3_COV = coveragePath([
  ...pts(0, 2.45, 660, "431,27 1129,27 1149,30 1379,30 1380,33 1568,33"),
  ...pts(1000, 2.24, 390, `-300,846 0,858 30,855 70,857 168,857 195,850 225,846 290,841 400,841 430,842 575,841 830,838 892,838 900,840 1020,840 1095,843 1125,847 1255,849 1310,853 1360,856 1440,856 1500,860 1567,861`),
  ...pts(1700, 1.823, 390, `0,861 35,863 80,868 120,879 320,879 370,873 590,872 620,868 760,865 860,861 1060,857 1160,853 1270,850 1350,846 1430,848 1490,846 1532,846`),
], 707, 0);

const P4_COV = [
  coveragePath([
    ...pts(0, 2.45, 920, `431,127 445,115 470,115 495,120 500,108 515,98 535,90 560,98 570,85 590,87 610,88 628,78 650,85 670,87 695,97 712,88 725,95 745,93 758,105 800,103 815,104 820,118 850,126 870,131 895,123 925,126 950,121 975,127 1000,123 1020,133 1045,138 1095,139 1120,130 1140,122 1165,120 1200,120 1225,116 1260,121 1300,124 1340,124 1368,128 1375,134 1400,138 1430,139 1460,145 1490,130 1530,131 1542,132`),
    ...pts(630, 2.24, 925, `0,118 30,122 50,129 110,130 130,122 190,118 220,110 245,102 325,105 340,125 370,128 400,121 450,115 550,114 570,110 600,113 650,115 680,123 715,120 750,98 770,86 800,82 835,92 846,95 848,78 880,64 940,65 955,100 990,107 1010,92 1050,80 1080,66 1120,58 1160,63 1200,72 1230,98 1260,110 1290,98 1320,86 1360,78 1395,72 1420,85 1450,92 1490,102 1520,90 1544,92`),
    ...pts(1320, 2.24, 925, `0,88 30,75 60,70 110,68 150,78 185,92 230,85 270,78 300,62 330,50 370,43 430,50 500,50 530,68 560,88 590,82 620,78 640,60 665,43 685,35 720,45 760,55 790,62 820,52 870,48 940,45 980,48 1000,45 1018,37 1030,55 1060,70 1080,95 1092,110`),
  ], 974, 1.4),
  coveragePath([
    ...pts(1320, 2.24, 925, `1169,135 1210,125 1250,105 1290,98 1320,88 1410,87 1440,102 1480,95 1522,96`),
    ...pts(2000, 2.8, 920, `0,108 20,105 60,108 62,122 77,122 77,108 150,102 215,107 220,113 280,118 330,112 360,106 400,112 450,117 485,122 520,127 545,120 590,113 650,108 690,101 760,105 810,112 860,118 900,108 930,93 980,88 1010,98 1050,115 1110,116 1140,95 1180,78 1220,72 1260,78 1300,82 1350,92 1400,88 1440,87 1470,78 1512,82`),
  ], 974, 1.4),
].join("");

/* Molecule track: each row lists [start, end, pointed tip]. */
const MOLECULES = [
  [[176, 1603, 1], [1604, 2540]],
  [[176, 2205, 1], [2213, 2540]],
  [[176, 1751, 1], [1752, 2540]],
  [[176, 1726, 1], [1731, 2540]],
  [[176, 1768, 1], [1841, 2540]],
  [[176, 1128, 1], [1128, 2540]],
  [[176, 519, 1], [610, 1399, 1], [1406, 2540]],
  [[218, 289, 1], [310, 367, 1], [461, 696, 1], [707, 825, 1], [833, 1209, 1], [1212, 2540]],
  [[176, 1630, 1], [1633, 2540]],
  [[176, 1689, 1], [1690, 2540]],
  [[176, 1086, 1], [1087, 2540]],
  [[176, 1451, 1], [1454, 2540]],
  [[176, 1535, 1], [1536, 2540]],
  [[176, 1774, 1], [1841, 2540]],
  [[176, 1402, 1], [1414, 1956, 1], [1986, 2540]],
  [[176, 987, 1], [1004, 1306, 1], [1326, 1913, 1], [1916, 2540]],
];
const MOLECULE_PATH = MOLECULES.map((row, i) => {
  const y = 712 + i * 14;
  return row.map(([a, b, tip]) => (tip ? `M${a} ${y}H${b - 5}L${b} ${y + 6}L${b - 5} ${y + 12}H${a}Z` : `M${a} ${y}H${b}V${y + 12}H${a}Z`)).join("");
}).join("");

function TrackCanvas({ top, height, base, range, coverage, lines = [], children }) {
  return (
    <Canvas width={WIDTH} height={height} viewBox={`${LEFT} ${top} ${WIDTH} ${height}`}>
      <path d={coverage} fill="#aeaeae" shapeRendering="crispEdges" />
      {lines.map(([x, y, h, c], i) => <rect key={i} x={x} y={y} width="1" height={h} fill={BASES[c]} />)}
      <rect x={LEFT} y={base + 1} width={WIDTH} height="1" fill="#808080" />
      <text x={180} y={top + 10} fontSize="8.6" fill="#222" textLength={range.length > 8 ? 27 : 23}>{range}</text>
      {children}
    </Canvas>
  );
}

function Ruler() {
  const ticks = Array.from({ length: 15 }, (_, i) => Math.round(175.6 + i * 169.45));
  return (
    <Canvas width={WIDTH} height={126} viewBox={`${LEFT} 2 ${WIDTH} 126`}>
      <text x="179" y="13" fontSize="11" fontWeight="700" textLength="24">4005</text>
      <rect x="176.5" y="17.5" width="2370" height="10" fill="#fff" stroke="#000" shapeRendering="crispEdges" />
      <rect x="1516.5" y="16.5" width="50" height="12" fill="#fff" stroke="#f00" strokeWidth="3" />
      <rect x="176.5" y="52.5" width="2363" height="65" fill="none" stroke="#c5c5d4" />
      <path d="M178 78h1146v1h-1146zM1392 78h1146v1h-1146z" />
      <path d="M177.500 78.500L186 75.500V81.500ZM2538.500 78.500L2530 75.500V81.500Z" />
      <text x="1358" y="83" fontSize="12" fontWeight="700" textAnchor="middle">6,978 bp</text>
      {ticks.slice(1).map((x) => <rect key={x} x={x} y="108" width="1" height="9" />)}
      {ticks.map((x, i) => (i % 2 === 0 ? (
        <text key={x} x={x} y="103" fontSize="9" fontWeight="700" textAnchor="middle">{`${193 + i / 2},000 bp`}</text>
      ) : null))}
      <path d="M176 118H2540V119H177V128H176Z" />
    </Canvas>
  );
}

function TrackPanel({ h, gap, coverageName, alignName, thumb, wide, children }) {
  return (
    <Panel $h={h} $gap={gap}>
      <NameColumn $open>
        <TrackName $coverage $wide={wide}>{coverageName}</TrackName>
        <TrackName $wide={wide}>{alignName}</TrackName>
      </NameColumn>
      <Strip $rule />
      <Strip />
      <DataColumn>{children}</DataColumn>
      <ScrollColumn><ScrollThumb $h={thumb} /></ScrollColumn>
    </Panel>
  );
}

export default function App() {
  return (
    <>
      <Page />
      <Window>
        <Panel $h={130}>
          <NameColumn $boxed />
          <Strip $rule $plain />
          <Strip $plain />
          <DataColumn $closed><Ruler /></DataColumn>
          <ScrollColumn />
        </Panel>
        <Panel $h={11} $gap={3}>
          <NameColumn $boxed $open />
          <Strip $rule $plain />
          <Strip $plain />
          <DataColumn />
          <ScrollColumn><ScrollThumb $h={7} /></ScrollColumn>
        </Panel>
        <TrackPanel wide h={253} gap={3} thumb={75} coverageName="4005:170000-...bam Coverage"
          alignName={"4005:170000-190000.bed.bx.as100.\nbam.barcodes.bx.bwa.bam"}>
          <TrackCanvas top={146} height={250} base={184} range="[0 - 43]" coverage={P1_COV}
            lines={[[1483, 156, 28, "r"], [1807, 165, 19, "b"]]}>
            <Reads data={P1_READS} />
            {Array.from({ length: 23 }, (_, i) => <rect key={i} x="1483" y={189 + i * 9} width="1" height="7" fill="#f00" />)}
          </TrackCanvas>
        </TrackPanel>
        <TrackPanel wide h={264} gap={3} thumb={56} coverageName={"4005:300k-end.bed.bx.as100.bam.b\narcodes.bx.bwa.bam Coverage"}
          alignName={"4005:300k-end.bed.bx.as100.bam.b\narcodes.bx.bwa.bam"}>
          <TrackCanvas top={402} height={261} base={440} range="[0 - 17]" coverage={P2_COV}
            lines={[[231, 438, 2, "o"], [237, 438, 2, "r"], [239, 438, 2, "o"], [241, 438, 2, "o"], [1182, 436, 2, "o"], [1182, 438, 2, "b"], [1184, 438, 2, "o"], [1186, 438, 2, "r"], [1188, 438, 2, "o"], [1190, 438, 2, "o"], [1528, 433, 7, "b"], [1536, 431, 7, "r"], [1536, 438, 2, "g"], [1600, 429, 11, "b"], [1787, 435, 5, "b"], [1807, 429, 11, "b"], [2371, 429, 9, "b"], [2371, 437, 3, "g"]].filter(([x]) => x !== 1787)}>
            <Reads data={P2_READS} />
          </TrackCanvas>
        </TrackPanel>
        <TrackPanel h={264} gap={3} thumb={18} coverageName="psitchensiscp....bam Coverage"
          alignName={"psitchensiscpmt_4.psitchensis.bx\n.as100.nm5.bam.mi.bx.molecule.be\nd.bam"}>
          <TrackCanvas top={669} height={261} base={707} range="[0 - 200]" coverage={P3_COV}>
            <path d={MOLECULE_PATH} fill="#c9c9c9" />
          </TrackCanvas>
        </TrackPanel>
        <TrackPanel h={264} gap={3} thumb={41} coverageName={"psitchensiscpmt_4.psitchensis.bx\n.as100.nm5.bam Coverage"}
          alignName={"psitchensiscpmt_4.psitchensis.bx\n.as100.nm5.bam"}>
          <TrackCanvas top={936} height={261} base={974} range="[0 - 104]" coverage={P4_COV}
            lines={[[285, 952, 14, "o"], [285, 966, 8, "g"], [1483, 939, 20, "r"], [1483, 959, 15, "b"], [1528, 942, 20, "o"], [1528, 962, 12, "b"], [1600, 947, 15, "r"], [1600, 962, 12, "b"], [1807, 962, 12, "b"]]}>
            <Reads data={P4_READS} />
          </TrackCanvas>
        </TrackPanel>
        <Panel $h={54}>
          <NameColumn $open />
          <Strip $rule $plain />
          <Strip $plain />
          <DataColumn $closed />
          <ScrollColumn />
        </Panel>
      </Window>
    </>
  );
}
